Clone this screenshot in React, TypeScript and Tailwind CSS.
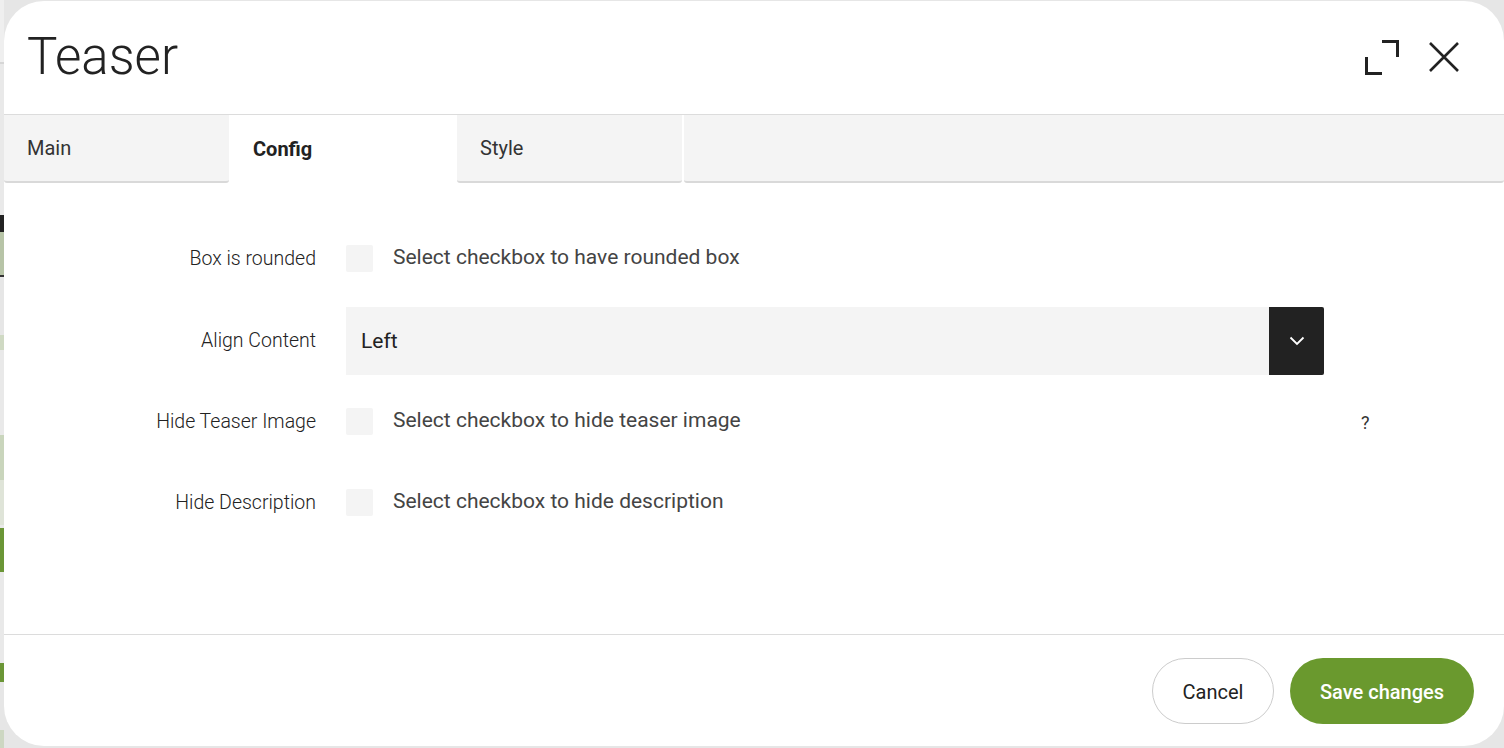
import React from "react";

const font = { fontFamily: "Roboto, 'Liberation Sans', sans-serif" };

function Strip() {
  return (
    <div className="w-[4px] h-[748px] flex flex-col shrink-0">
      <div className="h-[62px] bg-[#efefef]" />
      <div className="h-[2px] bg-[#d6d6d6]" />
      <div className="h-[151px] bg-[#e9e9e9]" />
      <div className="h-[17px] bg-[#222222]" />
      <div className="h-[43px] bg-[#b7c4a7]" />
      <div className="h-[2px] bg-[#333333]" />
      <div className="h-[58px] bg-[#e6e6e6]" />
      <div className="h-[15px] bg-[#cfd9c3]" />
      <div className="h-[85px] bg-[#e9e9e9]" />
      <div className="h-[45px] bg-[#c9d5bc]" />
      <div className="h-[45px] bg-[#dfe4d8]" />
      <div className="h-[3px] bg-[#e9e9e9]" />
      <div className="h-[44px] bg-[#6b9636]" />
      <div className="h-[91px] bg-[#e9e9e9]" />
      <div className="h-[19px] bg-[#6b9636]" />
      <div className="h-[48px] bg-[#e6e6e6]" />
      <div className="flex-1 bg-[#cdd7c2]" />
    </div>
  );
}

function Checkbox() {
  return <div className="w-[27px] h-[27px] bg-[#f4f4f4] rounded-[2px] shrink-0" />;
}

export default function App() {
  return (
    <div className="w-[1504px] h-[748px] flex bg-[#e6e6e6] overflow-hidden" style={font}>
      <Strip />
      <div className="flex-1 mt-[1px] h-[745px] bg-white rounded-[40px] flex flex-col overflow-hidden">
        {/* Header */}
        <div className="h-[113px] flex items-center justify-between pl-[23px] pr-[44px] shrink-0">
          <h1 className="text-[51px] font-light text-[#222] leading-none mt-[-2px]">Teaser</h1>
          <div className="flex items-center gap-[27px] mt-[-2px]">
            <svg width="38" height="38" viewBox="0 0 38 38" fill="none" stroke="#222" strokeWidth="3">
              <path d="M19 3.5 H34.5 V19" />
              <path d="M3.5 19 V35.5 H19" />
            </svg>
            <svg width="32" height="32" viewBox="0 0 32 32" fill="none" stroke="#222" strokeWidth="2.6">
              <path d="M2 2 L30 30 M30 2 L2 30" />
            </svg>
          </div>
        </div>
        {/* Tabs */}
        <div className="h-[70px] border-t border-[#dcdcdc] flex gap-[2px] shrink-0">
          <div className="w-[225px] h-[68px] bg-[#f4f4f4] border-b-[2px] border-[#d9d9d9] rounded-b-[3px] flex items-center pl-[23px] text-[20px] text-[#333]">
            Main
          </div>
          <div className="w-[225px] h-[68px] bg-white flex items-center pl-[22px] text-[20px] font-bold text-[#222]">
            Config
          </div>
          <div className="w-[225px] h-[68px] bg-[#f4f4f4] border-b-[2px] border-[#d9d9d9] rounded-b-[3px] flex items-center pl-[23px] text-[20px] text-[#333] ml-[-1px]">
            Style
          </div>
          <div className="flex-1 h-[68px] bg-[#f4f4f4] border-b-[2px] border-[#d9d9d9] rounded-b-[3px]" />
        </div>
        {/* Body */}
        <div className="flex-1 flex flex-col pt-[47px]">
          <div className="h-[54px] flex items-center">
            <div className="w-[312px] text-right text-[19.5px] font-light text-[#222] mt-[2px]">Box is rounded</div>
            <div className="ml-[30px] flex items-center gap-[20px]">
              <Checkbox />
              <span className="text-[21px] text-[#444]">Select checkbox to have rounded box</span>
            </div>
          </div>
          <div className="mt-[22px] h-[68px] flex items-center">
            <div className="w-[312px] text-right text-[19.5px] font-light text-[#222]">Align Content</div>
            <div className="ml-[30px] w-[978px] h-[68px] bg-[#f4f4f4] flex items-center justify-between">
              <span className="pl-[15px] text-[21px] text-[#222] mt-[1px]">Left</span>
              <div className="w-[55px] h-[68px] bg-[#222] rounded-r-[2px] flex items-center justify-center">
                <svg width="16" height="10" viewBox="0 0 16 10" fill="none" stroke="white" strokeWidth="1.8">
                  <path d="M1.5 1.5 L8 8 L14.5 1.5" />
                </svg>
              </div>
            </div>
          </div>
          <div className="mt-[19px] h-[54px] flex items-center">
            <div className="w-[312px] text-right text-[19.5px] font-light text-[#222] mt-[2px]">Hide Teaser Image</div>
            <div className="ml-[30px] w-[978px] flex items-center gap-[20px]">
              <Checkbox />
              <span className="text-[21px] text-[#444]">Select checkbox to hide teaser image</span>
            </div>
            <span className="ml-[37px] mt-[3px] text-[18px] text-[#333]">?</span>
          </div>
          <div className="mt-[27px] h-[54px] flex items-center">
            <div className="w-[312px] text-right text-[19.5px] font-light text-[#222] mt-[2px]">Hide Description</div>
            <div className="ml-[30px] flex items-center gap-[20px]">
              <Checkbox />
              <span className="text-[21px] text-[#444]">Select checkbox to hide description</span>
            </div>
          </div>
        </div>
        {/* Footer */}
        <div className="h-[112px] border-t border-[#dcdcdc] flex justify-end items-start pt-[23px] pr-[30px] gap-[16px] shrink-0">
          <button className="w-[122px] h-[66px] rounded-full border border-[#cccccc] bg-white text-[20px] text-[#222] pt-[1px]">
            Cancel
          </button>
          <button className="w-[184px] h-[66px] rounded-full bg-[#6a992e] text-[20px] font-medium text-white pt-[1px]">
            Save changes
          </button>
        </div>
      </div>
    </div>
  );
}
